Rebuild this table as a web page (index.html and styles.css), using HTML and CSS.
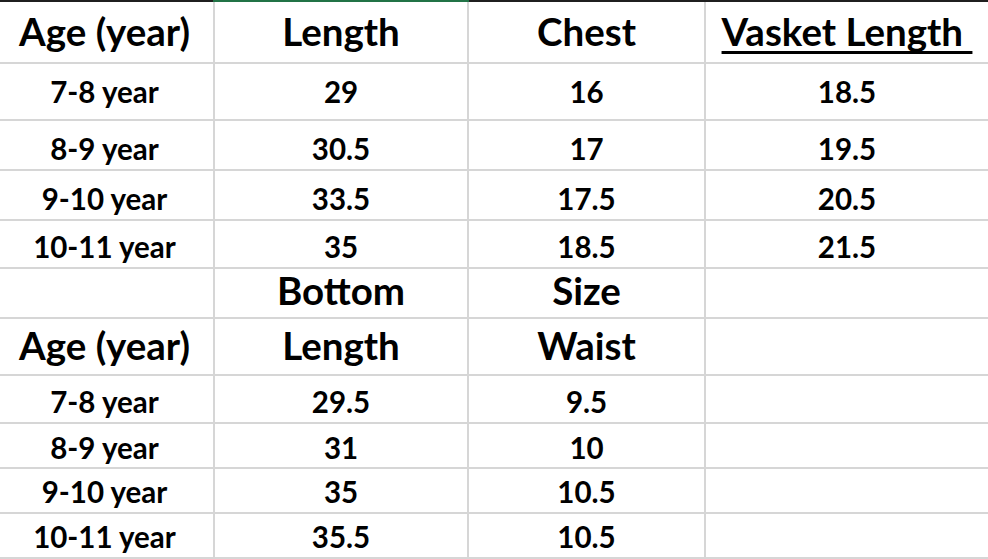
FILE: index.html
```html
<!DOCTYPE html>
<html>
<head>
<meta charset="utf-8">
<link rel="stylesheet" href="styles.css">
</head>
<body>
<div class="sheet">
  <div class="topbar">
    <div class="seg dark"></div>
    <div class="seg green"></div>
    <div class="seg dark"></div>
    <div class="seg dark"></div>
  </div>
  <div class="row r1 head">
    <div class="cell">Age (year)</div>
    <div class="cell">Length</div>
    <div class="cell">Chest</div>
    <div class="cell"><span class="ul">Vasket Length&nbsp;</span></div>
  </div>
  <div class="row r2">
    <div class="cell">7-8 year</div>
    <div class="cell">29</div>
    <div class="cell">16</div>
    <div class="cell">18.5</div>
  </div>
  <div class="row r3">
    <div class="cell">8-9 year</div>
    <div class="cell">30.5</div>
    <div class="cell">17</div>
    <div class="cell">19.5</div>
  </div>
  <div class="row r4">
    <div class="cell">9-10 year</div>
    <div class="cell">33.5</div>
    <div class="cell">17.5</div>
    <div class="cell">20.5</div>
  </div>
  <div class="row r5">
    <div class="cell">10-11 year</div>
    <div class="cell">35</div>
    <div class="cell">18.5</div>
    <div class="cell">21.5</div>
  </div>
  <div class="row r6 head">
    <div class="cell"></div>
    <div class="cell">Bottom</div>
    <div class="cell">Size</div>
    <div class="cell"></div>
  </div>
  <div class="row r7 head">
    <div class="cell">Age (year)</div>
    <div class="cell">Length</div>
    <div class="cell">Waist</div>
    <div class="cell"></div>
  </div>
  <div class="row r8">
    <div class="cell">7-8 year</div>
    <div class="cell">29.5</div>
    <div class="cell">9.5</div>
    <div class="cell"></div>
  </div>
  <div class="row r9">
    <div class="cell">8-9 year</div>
    <div class="cell">31</div>
    <div class="cell">10</div>
    <div class="cell"></div>
  </div>
  <div class="row r10">
    <div class="cell">9-10 year</div>
    <div class="cell">35</div>
    <div class="cell">10.5</div>
    <div class="cell"></div>
  </div>
  <div class="row r11">
    <div class="cell">10-11 year</div>
    <div class="cell">35.5</div>
    <div class="cell">10.5</div>
    <div class="cell"></div>
  </div>
</div>
</body>
</html>
```

FILE: styles.css
```css
html, body {
  margin: 0;
  padding: 0;
  background: #ffffff;
}

.sheet {
  width: 988px;
  height: 559px;
  overflow: hidden;
  font-family: Lato, "Liberation Sans", sans-serif;
  font-weight: 700;
  color: #000;
}

.topbar,
.row {
  display: grid;
  grid-template-columns: 215px 254px 237px 1fr;
}

.topbar {
  height: 2px;
}

.seg.dark {
  background: #1f1f1f;
}

.seg.green {
  background: #217346;
  margin-left: -2px;
}

.row {
  box-sizing: border-box;
  font-size: 29.5px;
  line-height: 1;
}

.row.head {
  font-size: 38.5px;
}

.cell {
  box-sizing: border-box;
  display: flex;
  align-items: flex-end;
  justify-content: center;
  border-right: 2px solid #d6d6d6;
  border-bottom: 2px solid #d6d6d6;
  white-space: nowrap;
}

.row .cell:first-child {
  padding-right: 4px;
}

.cell:last-child {
  border-right: none;
}

.ul {
  text-decoration: underline;
  text-decoration-thickness: 3px;
  text-underline-offset: 5px;
  text-decoration-skip-ink: none;
}

.r1  { height: 62px; }
.r2  { height: 57px; }
.r3  { height: 50px; }
.r4  { height: 50px; }
.r5  { height: 48px; }
.r6  { height: 50px; }
.r7  { height: 57px; }
.r8  { height: 48px; }
.r9  { height: 45px; }
.r10 { height: 45px; }
.r11 { height: 45px; }

.r1 .cell  { padding-bottom: 12px; }
.r2 .cell  { padding-bottom: 13px; }
.r3 .cell  { padding-bottom: 6px; }
.r4 .cell  { padding-bottom: 6px; }
.r5 .cell  { padding-bottom: 6px; }
.r6 .cell  { padding-bottom: 8px; }
.r7 .cell  { padding-bottom: 10px; }
.r8 .cell  { padding-bottom: 6px; }
.r9 .cell  { padding-bottom: 5px; }
.r10 .cell { padding-bottom: 6px; }
.r11 .cell { padding-bottom: 6px; }
```
